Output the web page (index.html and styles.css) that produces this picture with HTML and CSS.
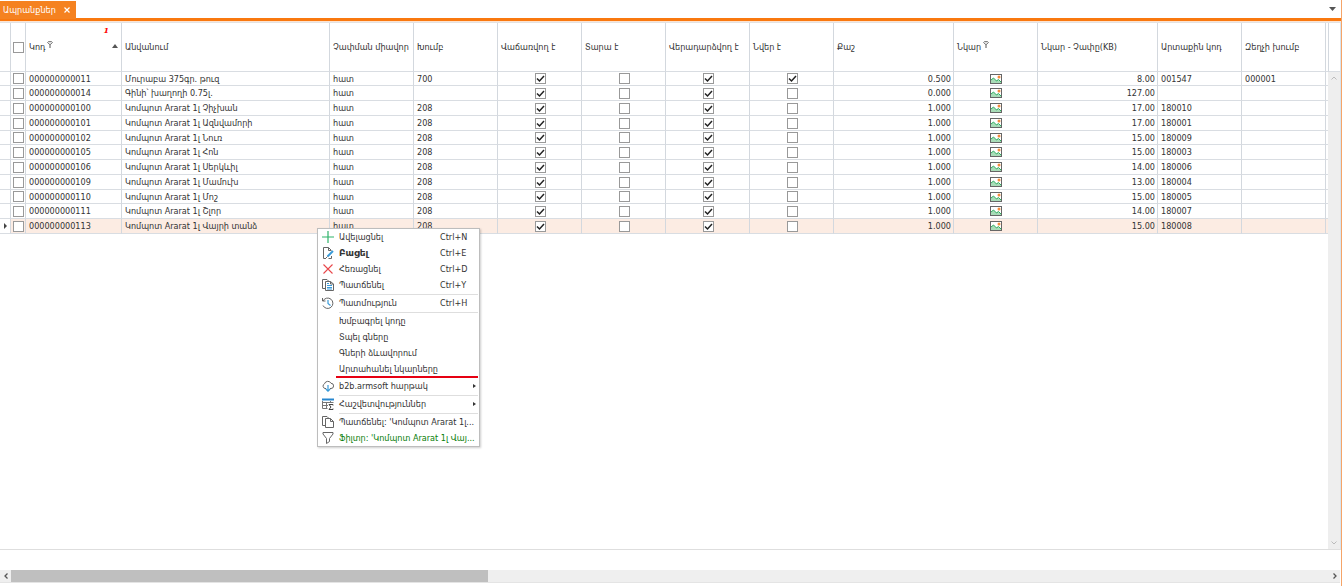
FILE: index.html
```
<!DOCTYPE html>
<html lang="hy">
<head>
<meta charset="utf-8">
<title>Ապրանքներ</title>
<link rel="stylesheet" href="styles.css">
</head>
<body>
<svg class="defs" aria-hidden="true">
  <symbol id="pic" viewBox="0 0 12 10">
    <rect x=".5" y=".5" width="11" height="9" fill="#fff" stroke="#666"/>
    <path d="M1 6 3.500 4 6 6.500 8 5.500 11 8V9H1z" fill="#a9dcb8"/>
    <path d="M1 6 3.500 4 6.500 7 8.500 5.500 11 8" fill="none" stroke="#2fae60"/>
    <circle cx="9" cy="3" r="1.500" fill="#f58b3c"/>
  </symbol>
  <symbol id="pin" viewBox="0 0 6 7">
    <path d="M.5 1.500 1.500.5H4.500L5.500 1.500 3.500 3.500H2.500z" fill="#ddd" stroke="#666" stroke-width=".8"/>
    <path d="M3 3.500V7" stroke="#555"/>
  </symbol>
</svg>
<header class="tabs">
  <div class="tab"><span>Ապրանքներ</span><button class="close" type="button" aria-label="Փակել"><svg width="6" height="6" viewBox="0 0 6 6"><path d="M.5.5 5.500 5.500M5.500.5.5 5.500" stroke="#fff" stroke-width="1.200"/></svg></button></div>
  <button class="more" type="button" aria-label="Ներդիրներ"><svg width="7" height="4" viewBox="0 0 7 4"><path d="M0 0H7L3.500 4z" fill="#555"/></svg></button>
</header>
<main class="view">
  <div class="grid">
    <table>
      <colgroup><col class="c-mark"><col class="c-sel"><col class="c-code"><col class="c-name"><col class="c-std"><col class="c-std"><col class="c-std"><col class="c-std"><col class="c-std"><col class="c-std"><col class="c-num"><col class="c-std"><col class="c-num"><col class="c-std"><col class="c-std"><col></colgroup>
      <thead>
        <tr><th></th><th class="sel"><input type="checkbox" aria-label="Բոլորը"></th><th><div class="head"><span>Կոդ</span><svg class="pin"><use href="#pin"/></svg><span class="order"><i>1</i><svg width="6" height="4" viewBox="0 0 6 4"><path d="M0 4H6L3 0z" fill="#555"/></svg></span></div></th><th>Անվանում</th><th>Չափման միավոր</th><th>Խումբ</th><th>Վաճառվող է</th><th>Տարա է</th><th>Վերադարձվող է</th><th>Նվեր է</th><th>Քաշ</th><th><div class="head"><span>Նկար</span><svg class="pin"><use href="#pin"/></svg></div></th><th>Նկար - Չափը(KB)</th><th>Արտաքին կոդ</th><th>Զեղչի խումբ</th><th></th></tr>
      </thead>
      <tbody>
        <tr><td></td><td class="sel"><input type="checkbox" aria-label="Ընտրել"></td><td>000000000011</td><td>Մուրաբա 375գր. թուզ</td><td>հատ</td><td>700</td><td class="ck"><input type="checkbox" aria-label="Վաճառվող է" checked></td><td class="ck"><input type="checkbox" aria-label="Տարա է"></td><td class="ck"><input type="checkbox" aria-label="Վերադարձվող է" checked></td><td class="ck"><input type="checkbox" aria-label="Նվեր է" checked></td><td class="n">0.500</td><td class="sel"><svg class="pic"><use href="#pic"/></svg></td><td class="n">8.00</td><td>001547</td><td>000001</td><td></td></tr>
        <tr><td></td><td class="sel"><input type="checkbox" aria-label="Ընտրել"></td><td>000000000014</td><td>Գինի՝ խաղողի 0.75լ.</td><td>հատ</td><td></td><td class="ck"><input type="checkbox" aria-label="Վաճառվող է" checked></td><td class="ck"><input type="checkbox" aria-label="Տարա է"></td><td class="ck"><input type="checkbox" aria-label="Վերադարձվող է" checked></td><td class="ck"><input type="checkbox" aria-label="Նվեր է"></td><td class="n">0.000</td><td class="sel"><svg class="pic"><use href="#pic"/></svg></td><td class="n">127.00</td><td></td><td></td><td></td></tr>
        <tr><td></td><td class="sel"><input type="checkbox" aria-label="Ընտրել"></td><td>000000000100</td><td>Կոմպոտ Ararat 1լ Չիչխան</td><td>հատ</td><td>208</td><td class="ck"><input type="checkbox" aria-label="Վաճառվող է" checked></td><td class="ck"><input type="checkbox" aria-label="Տարա է"></td><td class="ck"><input type="checkbox" aria-label="Վերադարձվող է" checked></td><td class="ck"><input type="checkbox" aria-label="Նվեր է"></td><td class="n">1.000</td><td class="sel"><svg class="pic"><use href="#pic"/></svg></td><td class="n">17.00</td><td>180010</td><td></td><td></td></tr>
        <tr><td></td><td class="sel"><input type="checkbox" aria-label="Ընտրել"></td><td>000000000101</td><td>Կոմպոտ Ararat 1լ Ազնվամորի</td><td>հատ</td><td>208</td><td class="ck"><input type="checkbox" aria-label="Վաճառվող է" checked></td><td class="ck"><input type="checkbox" aria-label="Տարա է"></td><td class="ck"><input type="checkbox" aria-label="Վերադարձվող է" checked></td><td class="ck"><input type="checkbox" aria-label="Նվեր է"></td><td class="n">1.000</td><td class="sel"><svg class="pic"><use href="#pic"/></svg></td><td class="n">17.00</td><td>180001</td><td></td><td></td></tr>
        <tr><td></td><td class="sel"><input type="checkbox" aria-label="Ընտրել"></td><td>000000000102</td><td>Կոմպոտ Ararat 1լ Նուռ</td><td>հատ</td><td>208</td><td class="ck"><input type="checkbox" aria-label="Վաճառվող է" checked></td><td class="ck"><input type="checkbox" aria-label="Տարա է"></td><td class="ck"><input type="checkbox" aria-label="Վերադարձվող է" checked></td><td class="ck"><input type="checkbox" aria-label="Նվեր է"></td><td class="n">1.000</td><td class="sel"><svg class="pic"><use href="#pic"/></svg></td><td class="n">15.00</td><td>180009</td><td></td><td></td></tr>
        <tr><td></td><td class="sel"><input type="checkbox" aria-label="Ընտրել"></td><td>000000000105</td><td>Կոմպոտ Ararat 1լ Հոն</td><td>հատ</td><td>208</td><td class="ck"><input type="checkbox" aria-label="Վաճառվող է" checked></td><td class="ck"><input type="checkbox" aria-label="Տարա է"></td><td class="ck"><input type="checkbox" aria-label="Վերադարձվող է" checked></td><td class="ck"><input type="checkbox" aria-label="Նվեր է"></td><td class="n">1.000</td><td class="sel"><svg class="pic"><use href="#pic"/></svg></td><td class="n">15.00</td><td>180003</td><td></td><td></td></tr>
        <tr><td></td><td class="sel"><input type="checkbox" aria-label="Ընտրել"></td><td>000000000106</td><td>Կոմպոտ Ararat 1լ Սերկևիլ</td><td>հատ</td><td>208</td><td class="ck"><input type="checkbox" aria-label="Վաճառվող է" checked></td><td class="ck"><input type="checkbox" aria-label="Տարա է"></td><td class="ck"><input type="checkbox" aria-label="Վերադարձվող է" checked></td><td class="ck"><input type="checkbox" aria-label="Նվեր է"></td><td class="n">1.000</td><td class="sel"><svg class="pic"><use href="#pic"/></svg></td><td class="n">14.00</td><td>180006</td><td></td><td></td></tr>
        <tr><td></td><td class="sel"><input type="checkbox" aria-label="Ընտրել"></td><td>000000000109</td><td>Կոմպոտ Ararat 1լ Մամուխ</td><td>հատ</td><td>208</td><td class="ck"><input type="checkbox" aria-label="Վաճառվող է" checked></td><td class="ck"><input type="checkbox" aria-label="Տարա է"></td><td class="ck"><input type="checkbox" aria-label="Վերադարձվող է" checked></td><td class="ck"><input type="checkbox" aria-label="Նվեր է"></td><td class="n">1.000</td><td class="sel"><svg class="pic"><use href="#pic"/></svg></td><td class="n">13.00</td><td>180004</td><td></td><td></td></tr>
        <tr><td></td><td class="sel"><input type="checkbox" aria-label="Ընտրել"></td><td>000000000110</td><td>Կոմպոտ Ararat 1լ Մոշ</td><td>հատ</td><td>208</td><td class="ck"><input type="checkbox" aria-label="Վաճառվող է" checked></td><td class="ck"><input type="checkbox" aria-label="Տարա է"></td><td class="ck"><input type="checkbox" aria-label="Վերադարձվող է" checked></td><td class="ck"><input type="checkbox" aria-label="Նվեր է"></td><td class="n">1.000</td><td class="sel"><svg class="pic"><use href="#pic"/></svg></td><td class="n">15.00</td><td>180005</td><td></td><td></td></tr>
        <tr><td></td><td class="sel"><input type="checkbox" aria-label="Ընտրել"></td><td>000000000111</td><td>Կոմպոտ Ararat 1լ Շլոր</td><td>հատ</td><td>208</td><td class="ck"><input type="checkbox" aria-label="Վաճառվող է" checked></td><td class="ck"><input type="checkbox" aria-label="Տարա է"></td><td class="ck"><input type="checkbox" aria-label="Վերադարձվող է" checked></td><td class="ck"><input type="checkbox" aria-label="Նվեր է"></td><td class="n">1.000</td><td class="sel"><svg class="pic"><use href="#pic"/></svg></td><td class="n">14.00</td><td>180007</td><td></td><td></td></tr>
        <tr class="current"><td class="sel"><svg width="3" height="6" viewBox="0 0 3 6"><path d="M0 0 3 3 0 6z" fill="#444"/></svg></td><td class="sel"><input type="checkbox" aria-label="Ընտրել"></td><td>000000000113</td><td>Կոմպոտ Ararat 1լ Վայրի տանձ</td><td>հատ</td><td>208</td><td class="ck"><input type="checkbox" aria-label="Վաճառվող է" checked></td><td class="ck"><input type="checkbox" aria-label="Տարա է"></td><td class="ck"><input type="checkbox" aria-label="Վերադարձվող է" checked></td><td class="ck"><input type="checkbox" aria-label="Նվեր է"></td><td class="n">1.000</td><td class="sel"><svg class="pic"><use href="#pic"/></svg></td><td class="n">15.00</td><td>180008</td><td></td><td></td></tr>
      </tbody>
    </table>
  </div>
  <div class="side">
    <div class="corner"></div>
    <div class="vscroll">
      <svg width="6" height="4" viewBox="0 0 6 4"><path d="M.5 3.500 3 1 5.500 3.500" fill="none" stroke="#bbb"/></svg>
      <svg width="6" height="4" viewBox="0 0 6 4"><path d="M.5.5 3 3 5.500.5" fill="none" stroke="#bbb"/></svg>
    </div>
  </div>
</main>
<footer class="hscroll">
  <button type="button" aria-label="Ձախ"><svg width="4" height="6" viewBox="0 0 4 6"><path d="M3.500.5 1 3 3.500 5.500" fill="none" stroke="#555" stroke-width="1.300"/></svg></button>
  <div class="track"><div class="thumb"></div></div>
  <button type="button" aria-label="Աջ"><svg width="4" height="6" viewBox="0 0 4 6"><path d="M.5.5 3 3 .5 5.500" fill="none" stroke="#555" stroke-width="1.300"/></svg></button>
</footer>
<nav class="menu">
  <button type="button"><svg viewBox="0 0 12 12"><path d="M6 0V12M0 6H12" stroke="#2fb36a" stroke-width="1.200"/></svg><span>Ավելացնել</span><kbd>Ctrl+N</kbd></button>
  <button type="button" class="strong"><svg viewBox="0 0 12 12" fill="none" stroke="#666"><path d="M9 4V3L6.500.5H1.500V11.500H4M6.500.5V3.500H9M9.500 9V11.500H6.500"/><path d="M5.500 9.500 11 4" stroke="#3a9bd9" stroke-width="2"/><path d="M4 11 5.500 9.500"/></svg><span>Բացել</span><kbd>Ctrl+E</kbd></button>
  <button type="button"><svg viewBox="0 0 12 12"><path d="M1.500 1.500 10.500 10.500M10.500 1.500 1.500 10.500" stroke="#e8474b" stroke-width="1.100"/></svg><span>Հեռացնել</span><kbd>Ctrl+D</kbd></button>
  <button type="button"><svg viewBox="0 0 12 12" fill="none" stroke="#666"><path d="M3.500 9.500H.5V.5H5L7 2.500"/><path d="M3.500 2.500H8.500L11.500 5V11.500H3.500zM8.500 2.500V5H11.500"/><path d="M5 6.500H10M5 8.500H10M5 10H10M5 4.500H7" stroke="#3a9bd9"/></svg><span>Պատճենել</span><kbd>Ctrl+Y</kbd></button>
  <hr>
  <button type="button"><svg viewBox="0 0 12 12" fill="none" stroke="#666"><path d="M.5 1V4H3.500M1 4A5.200 5.200 0 1 1 1 8.500"/><path d="M6 3V6.500L8.500 8.500" stroke="#3a9bd9" stroke-width="1.200"/></svg><span>Պատմություն</span><kbd>Ctrl+H</kbd></button>
  <hr>
  <button type="button"><i></i><span>Խմբագրել կոդը</span></button>
  <button type="button"><i></i><span>Տպել գները</span></button>
  <button type="button"><i></i><span>Գների ձևավորում</span></button>
  <button type="button"><i></i><span>Արտահանել նկարները</span></button>
  <hr class="accent">
  <button type="button"><svg viewBox="0 0 12 12" fill="none" stroke="#666"><path d="M4 8.500H3A2.500 2.500 0 0 1 2.500 3.800 3.500 3.500 0 0 1 9 3.300 2.600 2.600 0 0 1 9 8.500H8"/><path d="M6 5V11M3.800 9 6 11.200 8.200 9" stroke="#3a9bd9" stroke-width="1.200"/></svg><span>b2b.armsoft հարթակ</span><b></b></button>
  <hr>
  <button type="button"><svg viewBox="0 0 12 12" fill="none" stroke="#777"><path d="M.5 4.500H11.500M.5 3V10.500H5.500M.5 7.500H6M4.500 4.500V10.500M8.500 3V5"/><path d="M11 7.500V6.500H7L9 9 7 11.500H11V10.500" stroke="#444"/><path d="M0 1.500H12" stroke="#2787cf" stroke-width="2"/></svg><span>Հաշվետվություններ</span><b></b></button>
  <hr>
  <button type="button"><svg viewBox="0 0 12 12" fill="none" stroke="#666"><path d="M3 9.500H.5V.5H5L7 2.500"/><path d="M3.500 2.500H8.500L11.500 5.500V11.500H3.500zM8.500 2.500V5.500H11.500"/></svg><span>Պատճենել: 'Կոմպոտ Ararat 1լ...</span></button>
  <button type="button" class="filter"><svg viewBox="0 0 12 12" fill="none" stroke="#666"><path d="M1 .5H11V2L7.500 6.500V9.500L4.500 11.500V6.500L1 2z"/></svg><span>Ֆիլտր: 'Կոմպոտ Ararat 1լ Վայ...</span></button>
</nav>
</body>
</html>
```
FILE: styles.css
```
* { box-sizing: border-box; }
body {
  margin: 0;
  height: 100vh;
  display: flex;
  flex-direction: column;
  background: #fff;
  color: #333;
  font: 9px/12px "DejaVu Sans Condensed", "DejaVu Sans", sans-serif;
  border-right: 1px solid #f5a468;
  overflow: hidden;
}
button { font: inherit; color: inherit; background: none; border: 0; padding: 0; }
svg { display: block; flex: none; }
.defs { position: absolute; width: 0; height: 0; }

.tabs {
  height: 22px;
  flex: none;
  display: flex;
  justify-content: space-between;
  border-bottom: 1px solid #fde3d0;
  box-shadow: inset 0 -3px #f9780f;
}
.tab {
  display: flex;
  align-items: center;
  gap: 8px;
  padding: 0 6px 0 3px;
  margin: 1px 0 2px;
  background: #f58220;
  color: #fff;
}
.more { padding: 0 5px 3px; }

.view {
  flex: 1;
  min-height: 0;
  display: flex;
  border-top: 1px solid #e3e3e3;
  border-bottom: 1px solid #dedede;
  border-right: 1px solid #d9e4ee;
}
.grid { flex: 1; min-width: 0; overflow: hidden; }
table { width: 100%; table-layout: fixed; border-collapse: separate; border-spacing: 0; }
.c-mark { width: 11px; }
.c-sel { width: 15px; }
.c-code { width: 96px; }
.c-name { width: 208px; }
.c-std { width: 84px; }
.c-num { width: 120px; }
th, td {
  padding: 0 2px 0 3px;
  border-right: 1px solid #d3d8de;
  border-bottom: 1px solid #d9dde2;
  text-align: left;
  font-weight: normal;
  white-space: nowrap;
  overflow: hidden;
  line-height: 12px;
}
th:last-child, td:last-child { padding: 0; border-right: 0; }
th { height: 49px; }
td { height: 15px; }
tr:nth-child(4n+1) td { height: 14px; }
.n { text-align: right; }
.sel { padding: 0; }
.ck { padding: 0 0 0 2px; }
.sel > *, .ck > * { margin: 0 auto; }
.current td + td { background: #fcece3; }
.head { display: flex; height: 48px; align-items: center; }
.pin { width: 6px; height: 7px; margin: 0 0 6px 2px; }
.order {
  height: 36px;
  margin: 0 0 12px auto;
  padding-top: 1px;
  display: flex;
  align-items: flex-start;
  gap: 3px;
  font: bold 8px/12px "DejaVu Serif", serif;
  color: #f00;
}
.order svg { margin: 20px 1px 0 0; }
input {
  appearance: none;
  display: block;
  width: 11px;
  height: 11px;
  border: 1px solid #999;
  background: #fff;
}
input:checked {
  background: #fff url("data:image/svg+xml,%3Csvg xmlns='http://www.w3.org/2000/svg' viewBox='0 0 9 9'%3E%3Cpath d='M1 4.500 3.500 7 8 2' fill='none' stroke='%23222' stroke-width='1.500'/%3E%3C/svg%3E");
}
.pic { width: 12px; height: 10px; }

.side { width: 12px; display: flex; flex-direction: column; }
.corner { height: 49px; border-left: 1px solid #d3d8de; border-bottom: 1px solid #d9dde2; }
.vscroll {
  flex: 1;
  display: flex;
  flex-direction: column;
  justify-content: space-between;
  align-items: center;
  padding: 4px 0;
  background: #eee;
}
.hscroll {
  height: 13px;
  flex: none;
  display: flex;
  margin: 20px 1px 3px 0;
  background: #efefef;
  border-bottom: 1px solid #e4e4e4;
}
.hscroll button { width: 11px; display: grid; place-items: center; }
.track { flex: 1; }
.thumb { width: 36.2%; height: 100%; background: #bfbfbf; }

.menu {
  position: absolute;
  left: 317px;
  top: 228px;
  width: 163px;
  border: 1px solid #bdbdbd;
  background: #fff;
  box-shadow: 1px 1px 2px #0003;
}
.menu button {
  width: 100%;
  height: 16px;
  display: flex;
  align-items: center;
  gap: 5px;
  padding: 0 3px 0 4px;
  text-align: left;
  white-space: nowrap;
}
.menu button svg, .menu i { width: 12px; height: 12px; flex: none; }
.menu span { flex: 1; }
.menu kbd { font: inherit; width: 36px; }
.menu b { border: 2px solid transparent; border-left: 3px solid #333; border-right: 0; }
.menu hr { height: 2px; margin: 0 1px 0 21px; border: 0; border-bottom: 1px solid #dedede; }
.menu .accent { background: #e60012; border: 0; margin: -1px 1px 0 18px; }
.menu .strong span { font-family: "DejaVu Sans", sans-serif; font-weight: bold; }
.menu .filter { color: #0a800a; }
```
